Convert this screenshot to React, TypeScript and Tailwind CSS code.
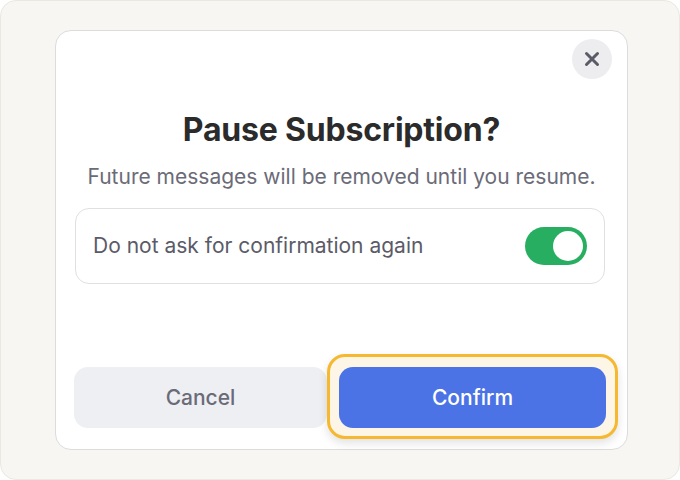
import React from "react";

export default function App() {
  return (
    <div
      className="w-[680px] h-[480px] bg-[#f7f6f2] border border-[#ebe8df] rounded-[16px] flex items-start pt-[29px] pl-[54px]"
      style={{ fontFamily: "Inter, 'Noto Sans', sans-serif" }}
    >
      <div className="relative w-[573px] h-[420px] bg-white border border-[#dcdcdc] rounded-[16px] flex flex-col px-[18px]">
        <button className="absolute top-[8px] right-[15px] w-[40px] h-[40px] rounded-full bg-[#ededf0] flex items-center justify-center">
          <svg width="16" height="16" viewBox="0 0 16 16" fill="none">
            <path d="M2.5 2.5 L13.5 13.5 M13.5 2.5 L2.5 13.5" stroke="#5b5b68" strokeWidth="3" strokeLinecap="round" />
          </svg>
        </button>
        <h1 className="mt-[80px] text-center text-[32px] leading-[38px] font-bold text-[#2b2b2b] tracking-[-0.2px]">
          Pause Subscription?
        </h1>
        <p className="mt-[15px] text-center text-[21px] leading-[26px] text-[#6b6b78]">
          Future messages will be removed until you resume.
        </p>
        <div className="mt-[18px] ml-[1px] w-[530px] h-[76px] border border-[#e0e0e0] rounded-[14px] flex items-center justify-between pl-[17px] pr-[17px]">
          <span className="text-[21px] text-[#5b5b68]">Do not ask for confirmation again</span>
          <div className="w-[62px] h-[38px] rounded-full bg-[#27ae60] flex items-center justify-end pr-[4px]">
            <div className="w-[30px] h-[30px] rounded-full bg-white" />
          </div>
        </div>
        <div className="mt-auto mb-[21px] flex items-center gap-[12px]">
          <button className="w-[253px] h-[61px] rounded-[14px] bg-[#eeeff2] text-[21px] font-medium text-[#6b6b78]">
            Cancel
          </button>
          <div className="relative">
            <div className="absolute -left-[12px] -right-[12px] -top-[13px] -bottom-[11px] rounded-[18px] border-[3px] border-[#f5b82e] bg-[#fdf6e7] shadow-[0_4px_10px_rgba(0,0,0,0.12)]" />
            <button className="relative w-[267px] h-[61px] rounded-[14px] bg-[#4c73e6] text-[21px] font-medium text-white">
              Confirm
            </button>
          </div>
        </div>
      </div>
    </div>
  );
}
